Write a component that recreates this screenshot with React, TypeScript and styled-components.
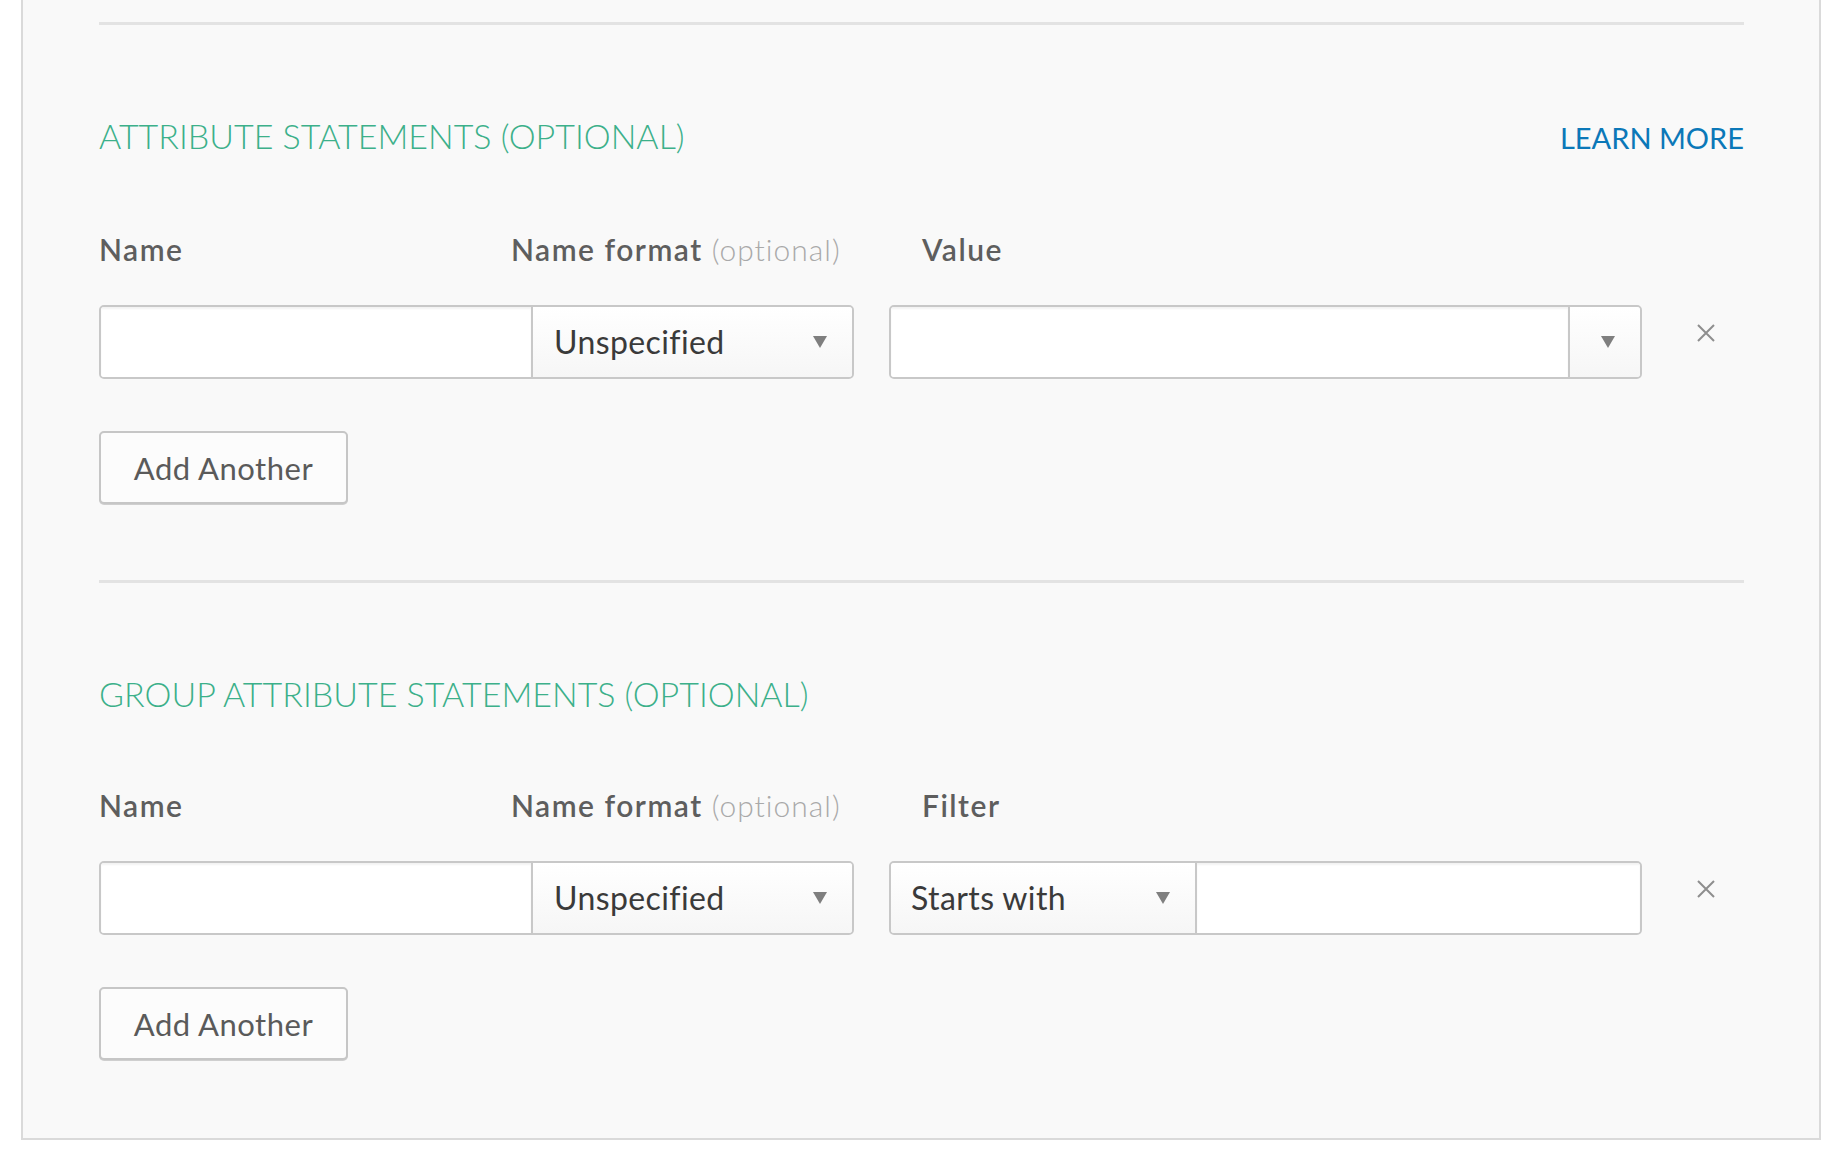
import React, { FC } from "react";
import styled, { createGlobalStyle } from "styled-components";

const GlobalStyle = createGlobalStyle`
  html, body {
    margin: 0;
    padding: 0;
    background: #ffffff;
  }
  body {
    font-family: Lato, "Open Sans", "Liberation Sans", sans-serif;
    color: #333333;
  }
  * {
    box-sizing: border-box;
  }
`;

const Panel = styled.div`
  width: 1800px;
  margin-left: 21px;
  background: #f9f9f9;
  border: 2px solid #dadada;
  border-top: none;
  padding: 22px 75px 2px 76px;
`;

const Section = styled.section`
  padding-bottom: 76px;
`;

const Divider = styled.div`
  height: 3px;
  background: #e3e3e3;
`;

const HeadingRow = styled.div`
  display: flex;
  justify-content: space-between;
  align-items: baseline;
  margin-top: 90px;
`;

const Heading = styled.h2`
  margin: 0;
  font-size: 34px;
  line-height: 42px;
  font-weight: 300;
  color: #3cb08a;
`;

const LearnMore = styled.a`
  font-size: 29px;
  line-height: 42px;
  font-weight: 400;
  color: #0b78b8;
  text-decoration: none;
`;

const LabelRow = styled.div`
  display: grid;
  grid-template-columns: 412px 411px 1fr;
  margin-top: 73px;
`;

const Label = styled.label`
  font-size: 30px;
  line-height: 35px;
  font-weight: 600;
  letter-spacing: 1.5px;
  color: #5e5e5e;
`;

const Optional = styled.span`
  font-weight: 300;
  letter-spacing: 1px;
  color: #a9a9a9;
`;

const FieldRow = styled.div`
  display: flex;
  align-items: flex-start;
  margin-top: 38px;
  height: 74px;
`;

const Group = styled.div<{ $width: number; $gap?: number }>`
  display: flex;
  width: ${(p) => p.$width}px;
  height: 74px;
  margin-left: ${(p) => p.$gap ?? 0}px;
  border: 2px solid #c8c8c8;
  border-radius: 5px;
  overflow: hidden;
`;

const TextInput = styled.input<{ $width?: number }>`
  ${(p) => (p.$width ? `width: ${p.$width}px;` : "flex: 1; min-width: 0;")}
  height: 100%;
  border: none;
  outline: none;
  background: #ffffff;
  box-shadow: inset 0 2px 2px rgba(0, 0, 0, 0.05);
  padding: 0 20px;
  font-family: inherit;
  font-size: 32px;
  color: #333333;
`;

const SelectBox = styled.div<{ $width?: number; $side: "left" | "right" }>`
  ${(p) => (p.$width ? `width: ${p.$width}px;` : "flex: 1;")}
  display: flex;
  align-items: center;
  justify-content: space-between;
  height: 100%;
  padding: 0 25px 0 ${(p) => (p.$side === "left" ? 21 : 20)}px;
  border-${(p) => p.$side}: 2px solid #c8c8c8;
  background: linear-gradient(#ffffff, #f6f6f6);
  font-size: 32px;
  line-height: 1;
  letter-spacing: 0.4px;
  color: #3a3a3a;
  cursor: pointer;
`;

const DropButton = styled.div`
  width: 72px;
  height: 100%;
  display: flex;
  align-items: center;
  justify-content: center;
  padding-left: 6px;
  border-left: 2px solid #c8c8c8;
  background: linear-gradient(#ffffff, #f6f6f6);
  cursor: pointer;
`;

const RemoveButton = styled.button`
  margin: 19px 0 0 55px;
  padding: 0;
  width: 18px;
  height: 18px;
  border: none;
  background: none;
  cursor: pointer;
  display: flex;
`;

const AddButton = styled.button`
  display: block;
  margin-top: 52px;
  width: 249px;
  height: 73px;
  border: 2px solid #c6c6c6;
  border-radius: 5px;
  background: #fcfcfc;
  box-shadow: 0 1px 0 #cfcfcf;
  font-family: inherit;
  font-size: 31px;
  letter-spacing: 0.5px;
  color: #5a5a5a;
  cursor: pointer;
`;

const Arrow: FC = () => (
  <svg width="14" height="12" viewBox="0 0 14 12">
    <polygon points="0,0 14,0 7,12" fill="#7f7f7f" />
  </svg>
);

const Cross: FC = () => (
  <svg width="18" height="18" viewBox="0 0 18 18">
    <path d="M1 1 L17 17 M17 1 L1 17" stroke="#8e8e8e" strokeWidth="2" fill="none" />
  </svg>
);

type SectionProps = {
  title: string;
  third: string;
  learnMore?: boolean;
  filter?: boolean;
};

const Statements: FC<SectionProps> = ({ title, third, learnMore, filter }) => {
  return (
    <Section>
      <Divider />
      <HeadingRow>
        <Heading>{title}</Heading>
        {learnMore && <LearnMore href="#">LEARN MORE</LearnMore>}
      </HeadingRow>
      <LabelRow>
        <Label>Name</Label>
        <Label>
          Name format <Optional>(optional)</Optional>
        </Label>
        <Label>{third}</Label>
      </LabelRow>
      <FieldRow>
        <Group $width={755}>
          <TextInput $width={430} />
          <SelectBox $side="left">
            <span>Unspecified</span>
            <Arrow />
          </SelectBox>
        </Group>
        {filter ? (
          <Group $width={753} $gap={35}>
            <SelectBox $side="right" $width={306}>
              <span>Starts with</span>
              <Arrow />
            </SelectBox>
            <TextInput />
          </Group>
        ) : (
          <Group $width={753} $gap={35}>
            <TextInput />
            <DropButton>
              <Arrow />
            </DropButton>
          </Group>
        )}
        <RemoveButton aria-label="remove">
          <Cross />
        </RemoveButton>
      </FieldRow>
      <AddButton>Add Another</AddButton>
    </Section>
  );
};

const App: FC = () => {
  return (
    <>
      <GlobalStyle />
      <Panel>
        <Statements title="ATTRIBUTE STATEMENTS (OPTIONAL)" third="Value" learnMore />
        <Statements title="GROUP ATTRIBUTE STATEMENTS (OPTIONAL)" third="Filter" filter />
      </Panel>
    </>
  );
};

export default App;
